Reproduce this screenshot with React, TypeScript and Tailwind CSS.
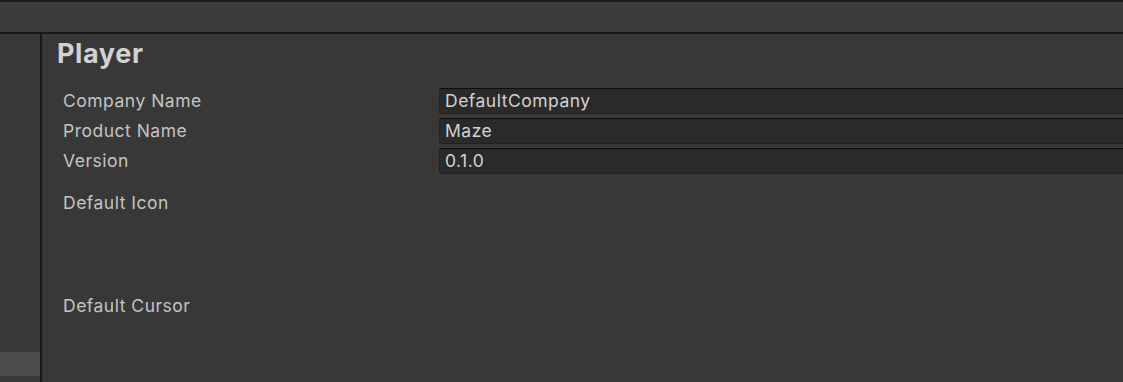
import React from "react";

const font = { fontFamily: "Inter, 'Noto Sans', sans-serif" };

function Field({ label, value }: { label: string; value: string }) {
  return (
    <div className="flex h-[30px] items-center">
      <div className="w-[397px] pl-[21px] text-[17.5px] text-[#c4c4c4] tracking-[0.5px]">{label}</div>
      <div className="flex h-[26px] flex-1 items-center rounded-l-[3px] border border-[#212121] border-t-[#0d0d0d] bg-[#2a2a2a] pl-[5px] -mr-2 text-[17.5px] text-[#d2d2d2] tracking-[0.5px]">
        {value}
      </div>
    </div>
  );
}

export default function App() {
  return (
    <div className="flex h-[382px] w-[1123px] flex-col overflow-hidden bg-[#383838]" style={font}>
      <div className="h-[2px] bg-[#191919]" />
      <div className="h-[30px] bg-[#3c3c3c]" />
      <div className="h-[2px] bg-[#191919]" />
      <div className="flex flex-1">
        <div className="flex w-[40px] flex-col">
          <div className="mt-[318px] h-[24px] bg-[#4d4d4d]" />
        </div>
        <div className="w-[2px] bg-[#191919]" />
        <div className="flex flex-1 flex-col overflow-hidden">
          <div className="flex h-[40px] items-center pl-[15px] text-[27px] font-bold text-[#d2d2d2] tracking-[0.6px]">
            Player
          </div>
          <div className="mt-[12px] flex flex-col">
            <Field label="Company Name" value="DefaultCompany" />
            <Field label="Product Name" value="Maze" />
            <Field label="Version" value="0.1.0" />
          </div>
          <div className="mt-[12px] h-[30px] flex items-center pl-[21px] text-[17.5px] text-[#c4c4c4] tracking-[0.5px]">
            Default Icon
          </div>
          <div className="mt-[73px] h-[30px] flex items-center pl-[21px] text-[17.5px] text-[#c4c4c4] tracking-[0.5px]">
            Default Cursor
          </div>
        </div>
      </div>
    </div>
  );
}
